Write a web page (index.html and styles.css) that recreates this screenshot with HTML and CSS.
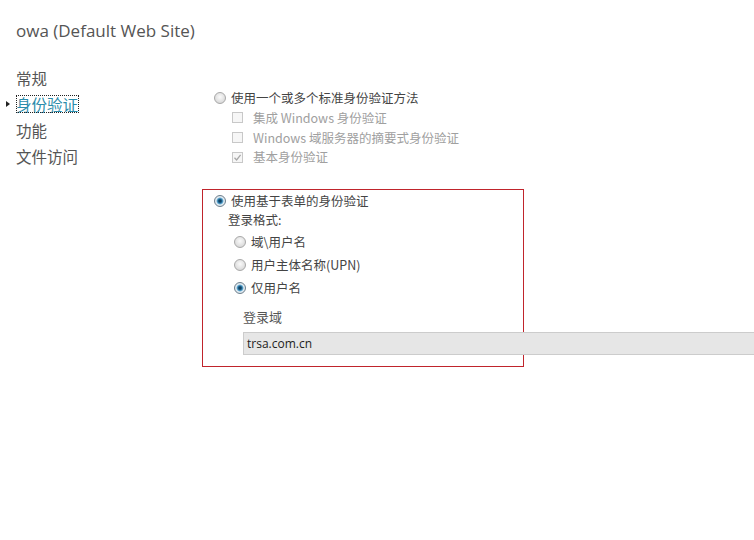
FILE: index.html
```html
<!DOCTYPE html>
<html lang="zh-CN">
<head>
<meta charset="utf-8">
<title>owa</title>
<link rel="stylesheet" href="styles.css">
</head>
<body>
<div class="page">
  <h1 class="title">owa (Default Web Site)</h1>
  <div class="main">
    <nav class="nav">
      <div class="nav-item">常规</div>
      <div class="nav-item active"><span class="caret"></span><span class="focus">身份验证</span></div>
      <div class="nav-item">功能</div>
      <div class="nav-item">文件访问</div>
    </nav>
    <div class="content">
      <div class="group">
        <div class="row"><span class="radio"></span><span class="label">使用一个或多个标准身份验证方法</span></div>
        <div class="row sub disabled"><span class="check"></span><span class="label">集成 Windows 身份验证</span></div>
        <div class="row sub disabled"><span class="check"></span><span class="label">Windows 域服务器的摘要式身份验证</span></div>
        <div class="row sub disabled"><span class="check checked"><svg viewBox="0 0 11 11" width="11" height="11"><path d="M2.5 5.8 L4.6 8 L8.6 2.8" fill="none" stroke="#a8a8a8" stroke-width="1.3"/></svg></span><span class="label">基本身份验证</span></div>
      </div>
      <div class="box">
        <div class="row"><span class="radio on"></span><span class="label">使用基于表单的身份验证</span></div>
        <div class="fmt">登录格式:</div>
        <div class="row opt"><span class="radio"></span><span class="label">域\用户名</span></div>
        <div class="row opt"><span class="radio"></span><span class="label">用户主体名称(UPN)</span></div>
        <div class="row opt"><span class="radio on"></span><span class="label">仅用户名</span></div>
        <div class="domain-label">登录域</div>
        <div class="input">trsa.com.cn</div>
      </div>
    </div>
  </div>
</div>
</body>
</html>
```

FILE: styles.css
```css
html, body {
  margin: 0;
  padding: 0;
  background: #ffffff;
  overflow: hidden;
}
body {
  width: 754px;
  height: 540px;
  font-family: "Open Sans", "Noto Sans CJK SC", sans-serif;
  color: #444;
}
.page {
  padding-top: 20px;
}
.title {
  margin: 0 0 0 16px;
  font-family: "Open Sans", sans-serif;
  font-weight: 400;
  font-size: 17px;
  line-height: 22px;
  height: 23px;
  color: #555;
}
.main {
  display: flex;
  margin-top: 22px;
}
.nav {
  width: 186px;
  padding-left: 16px;
  flex: none;
}
.nav-item {
  position: relative;
  height: 26px;
  line-height: 26px;
  font-family: "Noto Sans CJK SC", sans-serif;
  font-size: 15.5px;
  color: #555;
}
.nav-item.active {
  color: #2b8cab;
}
.focus {
  outline: 1px dotted #222;
  outline-offset: -1px;
  padding: 0 1px 0 0;
  line-height: 18px;
  display: inline-block;
}
.caret {
  position: absolute;
  left: -10px;
  top: 10px;
  width: 0;
  height: 0;
  border-top: 3.5px solid transparent;
  border-bottom: 3.5px solid transparent;
  border-left: 4px solid #222;
}
.content {
  flex: none;
  width: 560px;
  padding-top: 23px;
  font-family: "Noto Sans CJK SC", sans-serif;
  font-size: 12.5px;
}
.group {
  padding-left: 12px;
}
.row {
  display: flex;
  align-items: center;
  height: 20px;
}
.label {
  line-height: 18px;
  color: #444;
}
.row.sub {
  padding-left: 18px;
  height: 19.7px;
}
.row.disabled .label {
  color: #a0a0a0;
}
.radio {
  flex: none;
  width: 12px;
  height: 12px;
  border-radius: 50%;
  box-sizing: border-box;
  border: 1px solid #a8a8a8;
  background: radial-gradient(circle at 50% 40%, #fafafa 0, #ebebeb 35%, #cfcfcf 100%);
  margin-right: 5px;
}
.radio.on {
  border-color: #6d7f8d;
  background: radial-gradient(circle at 50% 50%, #0c2f48 0, #1d5f88 25%, #5aa3cd 40%, #e4eef4 55%, #d0d6db 100%);
}
.check {
  flex: none;
  width: 11px;
  height: 11px;
  box-sizing: border-box;
  border: 1px solid #c8c8c8;
  background: #f6f6f6;
  margin-right: 10px;
  display: flex;
  align-items: center;
  justify-content: center;
}
.check svg {
  display: block;
  flex: none;
}
.box {
  margin-top: 22px;
  width: 309px;
  border: 1px solid #c0242c;
  padding: 1px 0 11px 11px;
}
.fmt {
  padding-left: 14px;
  height: 19px;
  line-height: 17px;
  color: #444;
}
.row.opt {
  padding-left: 20px;
  height: 23px;
}
.domain-label {
  margin-top: 8px;
  padding-left: 29px;
  height: 20px;
  line-height: 20px;
  font-size: 13px;
  color: #555;
}
.input {
  margin-top: 5px;
  margin-left: 29px;
  width: 520px;
  height: 23px;
  box-sizing: border-box;
  border: 1px solid #cccccc;
  background: #e6e6e6;
  padding-left: 3px;
  line-height: 21px;
  font-family: "Open Sans", sans-serif;
  font-size: 12px;
  color: #222;
}
```
